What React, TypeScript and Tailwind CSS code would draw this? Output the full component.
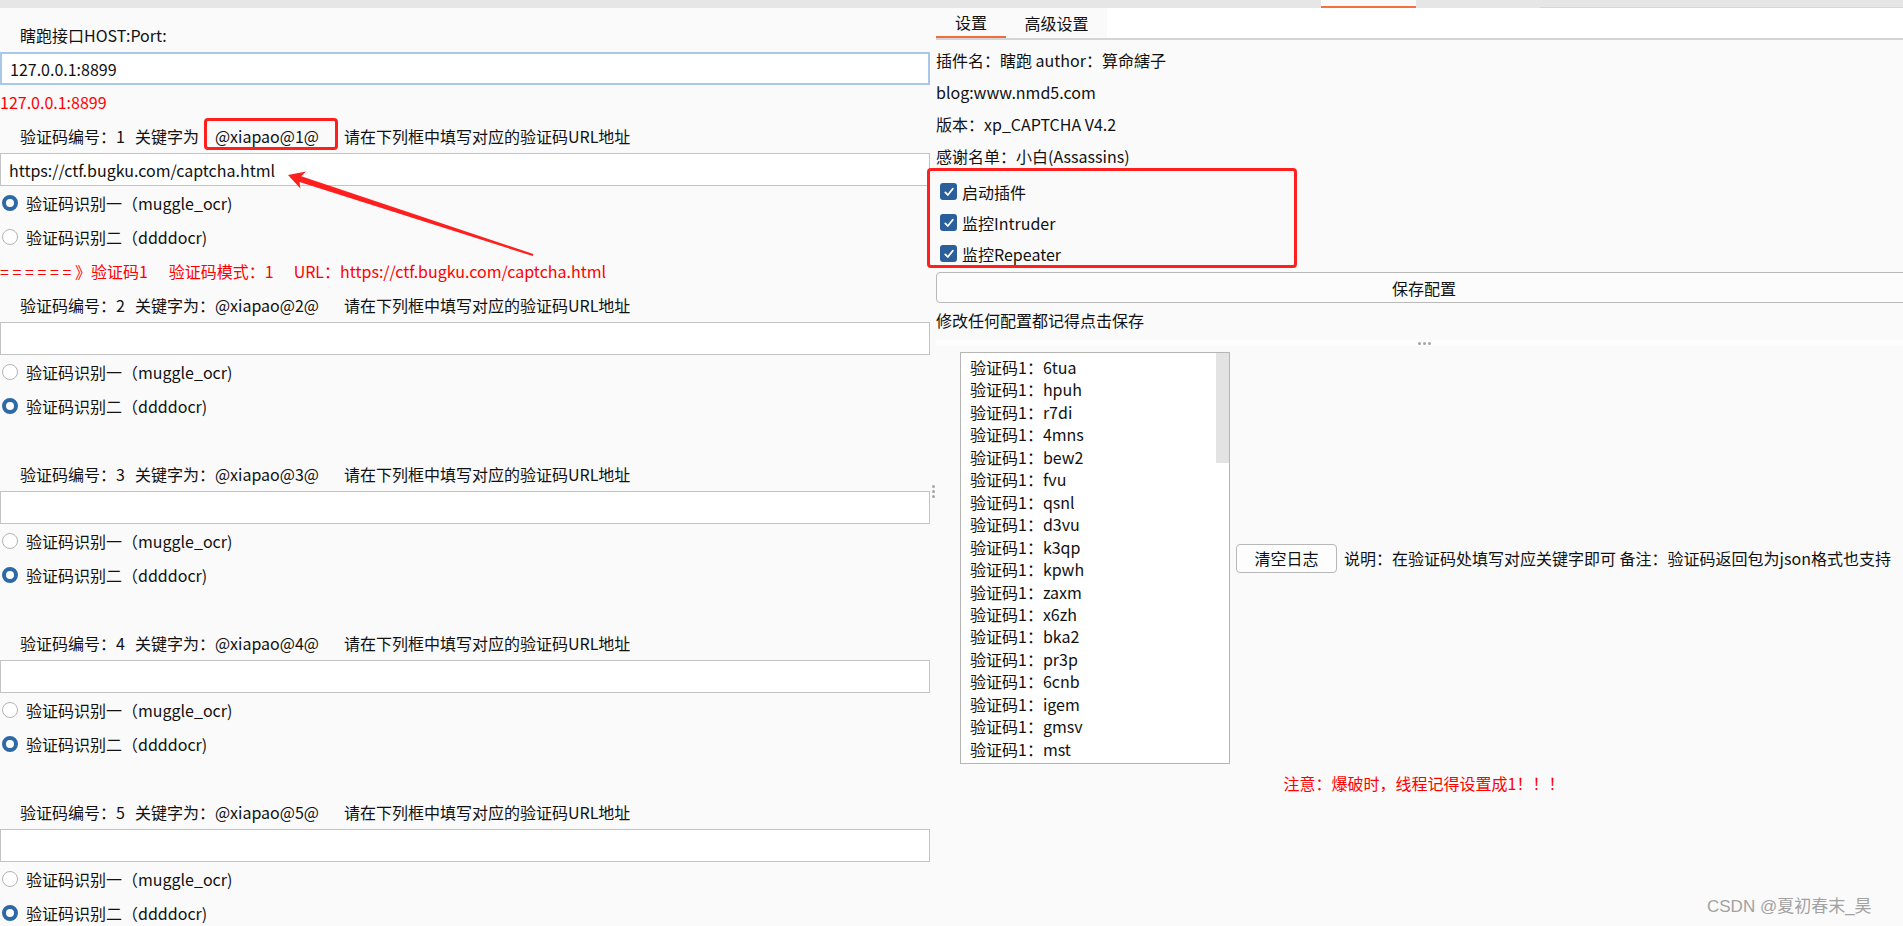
import React from "react";

function Radio({ on }: { on: boolean }) {
  return on ? (
    <span className="inline-block w-[16px] h-[16px] rounded-full border-[4.5px] border-[#2c69a5] bg-white shrink-0" />
  ) : (
    <span className="inline-block w-[16px] h-[16px] rounded-full border border-[#b4b4b4] bg-white shrink-0" />
  );
}

function Check() {
  return (
    <span className="inline-flex items-center justify-center w-[17px] h-[17px] rounded-[3px] bg-[#2b5f9b] shrink-0">
      <svg width="12" height="12" viewBox="0 0 12 12">
        <path d="M2.3 6.4 L4.8 9 L9.8 2.8" fill="none" stroke="#ffffff" strokeWidth="1.8" strokeLinecap="round" strokeLinejoin="round" />
      </svg>
    </span>
  );
}

function Group({
  n,
  url,
  sel,
  log,
  hideColon,
}: {
  n: number;
  url?: string;
  sel: 1 | 2;
  log?: boolean;
  hideColon?: boolean;
}) {
  return (
    <div>
      <div className="h-[35px] flex items-center pl-[20px] whitespace-nowrap">
        <span>验证码编号：{n}</span>
        <span className="ml-[10px]">
          关键字为<span className={hideColon ? "text-transparent" : ""}>：</span>
        </span>
        <span className="inline-block w-[129px]">@xiapao@{n}@</span>
        <span>请在下列框中填写对应的验证码URL地址</span>
      </div>
      <div className="h-[33px] w-[930px] bg-white border border-[#c3c3c3] flex items-center pl-[8px]">
        {url}
      </div>
      <div className="h-[34px] flex items-center pl-[2px] gap-[8px]">
        <Radio on={sel === 1} />
        <span>验证码识别一（muggle_ocr)</span>
      </div>
      <div className="h-[34px] flex items-center pl-[2px] gap-[8px]">
        <Radio on={sel === 2} />
        <span>验证码识别二（ddddocr)</span>
      </div>
      <div className="h-[33px] flex items-center text-[#ff0000] whitespace-nowrap">
        {log ? (
          <>
            <span className="tracking-[3.6px]">======</span>
            <span>》验证码1</span>
            <span className="ml-[21px]">验证码模式：1</span>
            <span className="ml-[20px]">URL：https://ctf.bugku.com/captcha.html</span>
          </>
        ) : null}
      </div>
    </div>
  );
}

const logs = [
  "6tua",
  "hpuh",
  "r7di",
  "4mns",
  "bew2",
  "fvu",
  "qsnl",
  "d3vu",
  "k3qp",
  "kpwh",
  "zaxm",
  "x6zh",
  "bka2",
  "pr3p",
  "6cnb",
  "igem",
  "gmsv",
  "mst",
];

export default function App() {
  return (
    <div className="relative w-[1903px] h-[926px] overflow-hidden bg-[#fafafa] text-[16px] text-[#111111] font-['Noto_Sans_CJK_SC','Noto_Sans',sans-serif]">
      {/* top strip */}
      <div className="h-[8px] bg-[#e6e6e6] flex">
        <div className="w-[1321px]" />
        <div className="w-[95px] bg-[#fafafa] border-b-[2px] border-[#f8703f]" />
        <div className="w-[124px]" />
        <div className="flex-1 border-b border-[#d6d8d8]" />
      </div>

      <div className="flex h-[918px]">
        {/* left panel */}
        <div className="w-[930px] shrink-0 pt-[9px] overflow-hidden">
          <div className="h-[35px] flex items-center pl-[20px]">瞎跑接口HOST:Port:</div>
          <div className="h-[33px] w-[930px] bg-white border-2 border-[#a9c7e7] flex items-center pl-[8px]">
            127.0.0.1:8899
          </div>
          <div className="h-[33px] flex items-center text-[#ff0000]">127.0.0.1:8899</div>
          <Group n={1} url="https://ctf.bugku.com/captcha.html" sel={1} log hideColon />
          <Group n={2} sel={2} />
          <Group n={3} sel={2} />
          <Group n={4} sel={2} />
          <Group n={5} sel={2} />
        </div>

        {/* vertical splitter */}
        <div className="w-[6px] shrink-0 flex flex-col items-center pt-[477px] gap-[2px]">
          <span className="w-[3px] h-[3px] rounded-full bg-[#a5a5a5]" />
          <span className="w-[3px] h-[3px] rounded-full bg-[#a5a5a5]" />
          <span className="w-[3px] h-[3px] rounded-full bg-[#a5a5a5]" />
        </div>

        {/* right panel */}
        <div className="w-[976px] shrink-0 flex flex-col">
          <div className="h-[32px] shrink-0 bg-white border-b-2 border-[#d2d5d5] flex">
            <div className="w-[70px] h-[30px] bg-[#fafafa] border-b-2 border-[#f26b3d] flex items-center justify-center">
              设置
            </div>
            <div className="w-[101px] h-[30px] bg-[#fafafa] flex items-center justify-center">高级设置</div>
          </div>

          <div className="h-[300px] shrink-0 pt-[4px]">
            <div className="h-[32px] flex items-center whitespace-nowrap">插件名：瞎跑 author：算命縖子</div>
            <div className="h-[32px] flex items-center">blog:www.nmd5.com</div>
            <div className="h-[32px] flex items-center">版本：xp_CAPTCHA V4.2</div>
            <div className="h-[32px] flex items-center">感谢名单：小白(Assassins)</div>
            <div className="mt-[4px] h-[31px] flex items-center pl-[4px] gap-[5px]">
              <Check />
              <span>启动插件</span>
            </div>
            <div className="h-[31px] flex items-center pl-[4px] gap-[5px]">
              <Check />
              <span>监控Intruder</span>
            </div>
            <div className="h-[31px] flex items-center pl-[4px] gap-[5px]">
              <Check />
              <span>监控Repeater</span>
            </div>
            <div className="mt-[3px] h-[31px] w-full rounded-[4px] border border-[#b9b9b9] bg-[#fcfcfc] flex items-center justify-center">
              保存配置
            </div>
            <div className="h-[34px] flex items-center">修改任何配置都记得点击保存</div>
          </div>

          {/* horizontal splitter */}
          <div className="h-[6px] shrink-0 bg-[#fdfdfd] flex items-center justify-center gap-[2px]">
            <span className="w-[3px] h-[3px] rounded-full bg-[#a5a5a5]" />
            <span className="w-[3px] h-[3px] rounded-full bg-[#a5a5a5]" />
            <span className="w-[3px] h-[3px] rounded-full bg-[#a5a5a5]" />
          </div>

          <div className="flex-1 pt-[6px]">
            <div className="flex items-center pl-[24px]">
              <div className="w-[270px] h-[412px] border border-[#b5b5b5] bg-white flex shrink-0">
                <div className="flex-1 pt-[3px] pl-[9px] leading-[22.45px] whitespace-nowrap">
                  {logs.map((l) => (
                    <div key={l}>验证码1：{l}</div>
                  ))}
                </div>
                <div className="w-[13px]">
                  <div className="h-[110px] bg-[#e3e3e3]" />
                </div>
              </div>
              <div className="ml-[6px] w-[101px] h-[29px] rounded-[4px] border border-[#b8b8b8] bg-[#fdfdfd] flex items-center justify-center shrink-0">
                清空日志
              </div>
              <span className="ml-[7px] whitespace-nowrap">
                说明：在验证码处填写对应关键字即可 备注：验证码返回包为json格式也支持
              </span>
            </div>
            <div className="mt-[2px] h-[34px] flex items-center justify-center text-[#ff0000]">
              注意：爆破时，线程记得设置成1！！！
            </div>
          </div>
        </div>
      </div>

      {/* annotations */}
      <div className="absolute left-[204px] top-[118px] w-[134px] h-[32px] border-[3px] border-[#ff1f1f] rounded-[4px] pointer-events-none" />
      <div className="absolute left-[927px] top-[168px] w-[370px] h-[100px] border-[3px] border-[#ff1f1f] rounded-[4px] pointer-events-none" />
      <svg className="absolute left-0 top-0 pointer-events-none" width="1903" height="926" viewBox="0 0 1903 926">
        <polygon
          points="288,175 306,171.4 301.3,176.2 533.3,254 532.7,256 299.5,181.9 300.4,188.6"
          fill="#ff1f1f"
        />
      </svg>
      <div className="absolute left-[1707px] top-[895px] text-[17px] leading-[24px] text-[#a2a2a2] whitespace-nowrap font-['Liberation_Sans','Noto_Sans_CJK_SC',sans-serif]">
        CSDN @夏初春末_昊
      </div>
    </div>
  );
}
